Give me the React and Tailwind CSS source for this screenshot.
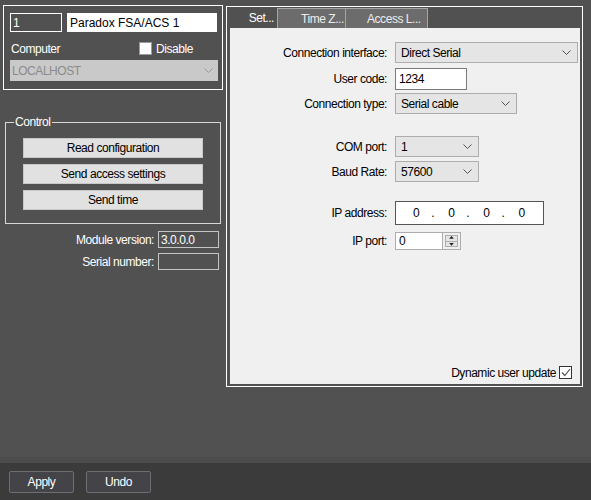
import React from 'react'

const Chevron = ({ color = '#555' }) => (
    <svg width="9" height="6" viewBox="0 0 9 6" className="shrink-0">
        <polyline points="0.5,0.5 4.5,4.5 8.5,0.5" fill="none" stroke={color} strokeWidth="1" />
    </svg>
)

const Select = ({ value, className }) => (
    <div className={`flex items-center justify-between bg-[#e5e5e5] border border-[#adadad] pl-[5px] pr-[6px] text-black ${className}`}>
        <span>{value}</span>
        <Chevron />
    </div>
)

const Row = ({ label, children, className = '' }) => (
    <div className={`flex items-center ${className}`}>
        <div className="w-[157px] text-right pr-[8px] text-black">{label}</div>
        {children}
    </div>
)

const ControlButton = ({ children }) => (
    <div className="h-[20px] w-[180px] flex items-center justify-center bg-[#e1e1e1] border border-[#c8c8c8] text-black">
        {children}
    </div>
)

export default function App() {
    return (
        <div
            className="w-[591px] h-[500px] bg-[#515151] flex flex-col text-[12px] tracking-[-0.45px] leading-none text-white overflow-hidden"
            style={{ fontFamily: '"Liberation Sans", Arial, sans-serif' }}
        >
            <div className="flex-1 flex">
                {/* Columna izquierda */}
                <div className="w-[223px] pl-[3px] pt-[5px] flex flex-col">
                    <div className="h-[85px] border border-white pl-[6px] pr-[4px] pt-[7px]">
                        <div className="flex gap-[5px]">
                            <div className="w-[52px] h-[19px] border border-white flex items-center pl-[2px]">1</div>
                            <div className="w-[150px] h-[19px] bg-white text-black flex items-center pl-[3px] tracking-normal">Paradox FSA/ACS 1</div>
                        </div>
                        <div className="flex items-center h-[23px] mt-[5px]">
                            <span className="w-[129px] pl-px">Computer</span>
                            <span className="w-[13px] h-[13px] bg-white border border-[#9a9a9a] mr-[4px]"></span>
                            <span>Disable</span>
                        </div>
                        <div className="h-[21px] bg-[#c9c9c9] flex items-center justify-between pl-[2px] pr-[5px] text-[#8b8b8b]">
                            <span>LOCALHOST</span>
                            <Chevron color="#9a9a9a" />
                        </div>
                    </div>

                    {/* Control */}
                    <div className="relative mt-[32px] ml-[2px] w-[216px] h-[102px] border border-[#d8d8d8] flex flex-col items-center pt-[15px] gap-[6px]">
                        <span className="absolute -top-[7px] left-[8px] bg-[#515151] px-[1px]">Control</span>
                        <ControlButton>Read configuration</ControlButton>
                        <ControlButton>Send access settings</ControlButton>
                        <ControlButton>Send time</ControlButton>
                    </div>

                    <div className="flex flex-col gap-[5px] mt-[7px]">
                        <div className="flex items-center justify-end pr-[4px]">
                            <span className="mr-[4px]">Module version:</span>
                            <div className="w-[61px] h-[17px] border border-[#c4c4c4] flex items-center pl-[2px]">3.0.0.0</div>
                        </div>
                        <div className="flex items-center justify-end pr-[4px]">
                            <span className="mr-[4px]">Serial number:</span>
                            <div className="w-[61px] h-[17px] border border-[#c4c4c4]"></div>
                        </div>
                    </div>
                </div>

                {/* Panel derecho */}
                <div className="ml-[3px] mt-[6px] w-[357px] h-[381px] border border-white flex flex-col pl-[3px] pr-[2px] pb-[2px] pt-px">
                    <div className="flex h-[20px] items-stretch whitespace-nowrap">
                        <div className="w-[47px] flex items-center justify-end pr-[3px]">Set...</div>
                        <div className="w-[69px] bg-[#6c6c6c] border border-b-0 border-[#a5a5a5] flex items-center pl-[23px] text-[#ececec]">Time Z...</div>
                        <div className="w-[82px] bg-[#6c6c6c] border border-b-0 border-l-0 border-[#a5a5a5] flex items-center pl-[21px] text-[#ececec]">Access L...</div>
                    </div>
                    <div className="flex-1 bg-[#f0f0f0] flex flex-col pt-[14px] pl-[8px]">
                        <Row label="Connection interface:">
                            <Select value="Direct Serial" className="w-[183px] h-[21px]" />
                        </Row>
                        <Row label="User code:" className="mt-[5px]">
                            <div className="w-[72px] h-[22px] bg-white border border-[#7a7a7a] flex items-center pl-[3px] text-black">1234</div>
                        </Row>
                        <Row label="Connection type:" className="mt-[3px]">
                            <Select value="Serial cable" className="w-[122px] h-[21px]" />
                        </Row>
                        <Row label="COM port:" className="mt-[22px]">
                            <Select value="1" className="w-[84px] h-[21px]" />
                        </Row>
                        <Row label="Baud Rate:" className="mt-[4px]">
                            <Select value="57600" className="w-[84px] h-[21px]" />
                        </Row>
                        <Row label="IP address:" className="mt-[19px]">
                            <div className="w-[149px] h-[24px] bg-white border border-[#555] flex items-center text-black">
                                <span className="ml-[17px]">0</span>
                                <span className="ml-[12px]">.</span>
                                <span className="ml-[14px]">0</span>
                                <span className="ml-[12px]">.</span>
                                <span className="ml-[14px]">0</span>
                                <span className="ml-[12px]">.</span>
                                <span className="ml-[14px]">0</span>
                            </div>
                        </Row>
                        <Row label="IP port:" className="mt-[7px]">
                            <div className="flex h-[18px]">
                                <div className="w-[48px] bg-white border border-[#adadad] flex items-center pl-[3px] text-black">0</div>
                                <div className="w-[18px] border border-l-0 border-[#adadad] bg-[#f0f0f0] flex items-center justify-center p-[2px]">
                                    <div className="w-full h-full bg-[#e5e5e5] border border-[#adadad] flex flex-col items-center justify-center gap-[2px]">
                                        <svg width="7" height="4" viewBox="0 0 7 4"><polygon points="3.5,0 7,4 0,4" fill="#222" /></svg>
                                        <div className="w-full h-px bg-[#adadad]"></div>
                                        <svg width="7" height="4" viewBox="0 0 7 4"><polygon points="0,0 7,0 3.5,4" fill="#222" /></svg>
                                    </div>
                                </div>
                            </div>
                        </Row>
                        <div className="flex-1"></div>
                        <div className="flex items-center justify-end pr-[8px] pb-[5px] text-black">
                            <span className="mr-[3px]">Dynamic user update</span>
                            <span className="w-[13px] h-[13px] bg-white border border-[#333] flex items-center justify-center">
                                <svg width="10" height="9" viewBox="0 0 10 9">
                                    <polyline points="1,4.5 3.8,7.5 9,1" fill="none" stroke="#555" strokeWidth="1.2" />
                                </svg>
                            </span>
                        </div>
                    </div>
                </div>
            </div>

            <div className="h-[6px] bg-[#4c4c4c]"></div>
            <div className="h-[37px] bg-[#3c3b3c] flex items-start pt-[8px] pl-[9px] gap-[12px]">
                <div className="w-[65px] h-[22px] border border-[#6e6e72] rounded-[2px] bg-[#444348] flex items-center justify-center">Apply</div>
                <div className="w-[65px] h-[22px] border border-[#6e6e72] rounded-[2px] bg-[#444348] flex items-center justify-center">Undo</div>
            </div>
        </div>
    )
}
